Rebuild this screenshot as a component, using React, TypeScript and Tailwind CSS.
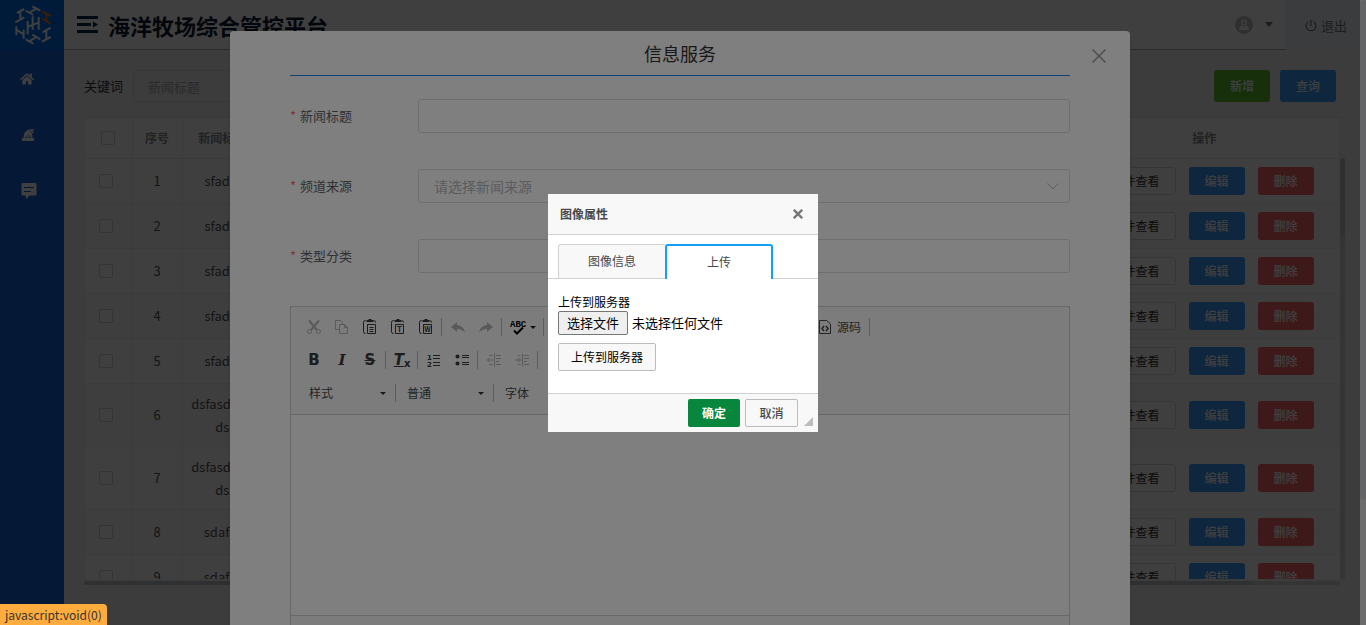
import React from "react";
import { FaHome } from "react-icons/fa";

const rows = [
  { id: 1, title: ["sfadsf"] },
  { id: 2, title: ["sfadsf"] },
  { id: 3, title: ["sfadsf"] },
  { id: 4, title: ["sfadsf"] },
  { id: 5, title: ["sfadsf"] },
  { id: 6, title: ["dsfasdfsfd", "ds"] },
  { id: 7, title: ["dsfasdfsfd", "ds"] },
  { id: 8, title: ["sdafaf"] },
  { id: 9, title: ["sdafaf"] },
];

function Logo() {
  return (
    <svg className="h-10 w-10" viewBox="42 14 112 120" fill="none" stroke="#fff" strokeWidth="6">
      <path d="M50 38 72 26M45 66 72 51M60 34V58" />
      <path d="M96 18 120 31M76 31 99 44M86 37 109 25" />
      <path d="M125 33 151 47M125 55 151 70M138 41V62" stroke="#e8741c" />
      <path d="M127 96 151 82M125 124 151 110M138 90V117" />
      <path d="M76 117 99 130M96 103 120 117M86 123 109 110" />
      <path d="M48 78V104M70 88V115M48 88 70 102" />
      <path d="M82 62V102M97 48V88M115 50V88M82 80 115 66" />
    </svg>
  );
}

function Check({ label }: { label: string }) {
  return (
    <input
      type="checkbox"
      aria-label={label}
      className="block mx-auto h-3.5 w-3.5 appearance-none rounded-[2px] border border-[#d0d2d8] bg-white"
    />
  );
}

function Sidebar() {
  return (
    <aside className="flex w-16 shrink-0 flex-col bg-[#1460d8]">
      <div className="mr-px flex h-[50px] items-center justify-center bg-[#006ce8] pl-0.5">
        <Logo />
      </div>
      <nav className="flex flex-col pt-px text-white">
        <a href="#home" aria-label="首页" className="flex h-14 items-center pl-5">
          <FaHome className="h-3.5 w-3.5" />
        </a>
        <a href="#ranch" aria-label="牧场" className="flex h-14 items-center pl-[21px]">
          <svg className="h-3.5 w-3.5" viewBox="0 0 14 14" fill="currentColor">
            <path d="M1 10h12v3H1z" />
            <path d="M2.500 9.500 C2.500 6 4.500 2.500 8 1.500 L12.500 1 L12.500 4.500 L11 6 L11.500 9.500z" />
            <path d="M8.500 2.500 10.500 4.500 12 2.500M5 9 7.500 7.500 10 9" fill="none" stroke="#1460d8" strokeWidth=".7" />
          </svg>
        </a>
        <a href="#message" aria-label="消息" className="flex h-14 items-center pl-[21px]">
          <svg className="h-4 w-4" viewBox="0 0 16 16">
            <path d="M1.500 0h13q1 0 1 1v10.500q0 1-1 1H8.500L5 16V12.500H1.500q-1 0-1-1V1q0-1 1-1z" fill="#fff" />
            <path d="M3 4.500h10M3 8.500h7" stroke="#1460d8" strokeWidth="1.200" />
          </svg>
        </a>
      </nav>
    </aside>
  );
}

function Header() {
  return (
    <header className="flex h-[50px]">
      <div className="flex flex-1 items-center border-b border-[#b0b0b0] bg-white pl-[13px]">
        <svg className="h-[18px] w-[22px] shrink-0" viewBox="0 0 22 18" fill="#002850">
          <path d="M0 0h21v3H0zM0 7h14v3H0zM0 14h21v3H0zM16 5.500l5 3-5 3z" />
        </svg>
        <h1 className="ml-[9px] text-[22px] leading-8 font-bold text-[#0c1830]">海洋牧场综合管控平台</h1>
        <div className="mr-[13px] ml-auto flex items-center gap-3">
          <svg className="h-[18px] w-[18px]" viewBox="0 0 18 18">
            <circle cx="9" cy="9" r="9" fill="#bcbcc0" />
            <circle cx="9" cy="6.500" r="3" fill="#fff" />
            <path d="M4 14q.5-4.500 3.500-4.500L9 11.500l1.500-2q3 0 3.500 4.500z" fill="#fff" />
            <circle cx="9" cy="6.500" r="1.600" fill="#bcbcc0" />
          </svg>
          <svg className="h-[5px] w-2" viewBox="0 0 8 5">
            <path d="M0 0h8L4 5z" fill="#707276" />
          </svg>
        </div>
      </div>
      <a href="#logout" className="flex w-20 items-center gap-1 bg-[#ecf3fb] pt-0.5 pl-[19px] text-[13px] text-[#777]">
        <svg className="h-3 w-3" viewBox="0 0 12 12" fill="none" stroke="#555" strokeWidth="1">
          <path d="M3.500 1.500a5 5 0 1 0 5 0M6 0v6" />
        </svg>
        退出
      </a>
    </header>
  );
}

function NewsTable() {
  return (
    <div className="mt-[15px] mr-5">
      <div className="flex">
        <div className="h-[462px] flex-1 overflow-hidden border-t border-l border-[#e6e8ee]">
          <table className="w-full table-fixed border-collapse text-center text-[13px] text-[#505256]">
            <colgroup>
              <col className="w-[47px]" />
              <col className="w-[50px]" />
              <col className="w-20" />
              <col />
              <col className="w-[270px]" />
            </colgroup>
            <thead>
              <tr className="h-10 border-b border-[#e6e8ee] bg-white text-xs text-[#85888e]">
                <th className="border-r border-[#e6e8ee]"><Check label="全选" /></th>
                <th className="border-r border-[#e6e8ee] font-bold">序号</th>
                <th className="font-bold">新闻标题</th>
                <th />
                <th className="border-r border-[#e6e8ee] font-bold">操作</th>
              </tr>
            </thead>
            <tbody>
              {rows.map((r) => (
                <tr
                  key={r.id}
                  className={
                    (r.title.length > 1 ? "h-[63px]" : "h-[45px]") +
                    " border-b border-[#ebeef5] bg-white even:bg-[#fafafa]"
                  }
                >
                  <td className="border-r border-[#ebeef5] pr-1"><Check label={"选择" + r.id} /></td>
                  <td className="border-r border-[#ebeef5]">{r.id}</td>
                  <td className="p-0 leading-[23px]">
                    {r.title.map((t) => (
                      <div key={t}>{t}</div>
                    ))}
                  </td>
                  <td />
                  <td className="p-0">
                    <div className="flex items-center justify-center gap-[13px] text-xs font-medium text-white">
                      <button className="h-7 w-20 rounded-[3px] border border-[#d8dade] bg-white font-normal text-[#333]">
                        附件查看
                      </button>
                      <button className="h-7 w-14 rounded-[3px] bg-[#3898f8]">编辑</button>
                      <button className="h-7 w-14 rounded-[3px] bg-[#f56464]">删除</button>
                    </div>
                  </td>
                </tr>
              ))}
            </tbody>
          </table>
        </div>
        <div className="w-[6px] border-t border-r border-[#e6e8ee] pt-10">
          <div className="h-full rounded-full bg-[#d4d4d6]">
            <div className="h-[78px] rounded-full bg-[#bfc1c5]" />
          </div>
        </div>
      </div>
      <div className="mt-0.5 mr-[6px] h-1 rounded-full bg-[#d4d4d6]">
        <div className="h-full w-[93%] rounded-full bg-[#bfc1c5]" />
      </div>
    </div>
  );
}

function Field({ id, label, select }: { id: string; label: string; select?: boolean }) {
  return (
    <div className="flex h-[34px] items-center">
      <label htmlFor={id} className="w-32 shrink-0 text-[13px] text-[#606266]">
        <span className="mr-1 text-[#f56c6c]">*</span>
        {label}
      </label>
      {select ? (
        <div className="relative flex-1">
          <select
            id={id}
            className="h-[34px] w-full appearance-none rounded-[3px] border border-[#dcdfe6] bg-white px-[15px] text-sm text-[#b4b8c0]"
          >
            <option>请选择新闻来源</option>
          </select>
          <svg className="absolute top-3.5 right-[11px] h-[7px] w-3" viewBox="0 0 12 7" fill="none" stroke="#b4b8c0">
            <path d="M.5.5 6 6 11.500.5" />
          </svg>
        </div>
      ) : (
        <input id={id} className="h-[34px] min-w-0 flex-1 rounded-[3px] border border-[#dcdfe6] bg-white px-[15px] text-sm" />
      )}
    </div>
  );
}

function Tool({ name, dim, children }: { name: string; dim?: boolean; children: React.ReactNode }) {
  return (
    <button
      aria-label={name}
      className={"flex h-7 w-7 shrink-0 items-center justify-center text-[#3a3a3a] " + (dim ? "opacity-35" : "")}
    >
      {children}
    </button>
  );
}

function Icon({ children }: { children: React.ReactNode }) {
  return (
    <svg className="h-4 w-4" viewBox="0 0 16 16" fill="none" stroke="currentColor">
      {children}
    </svg>
  );
}

function Sep() {
  return <span className="mr-0.5 ml-px h-[18px] w-px shrink-0 bg-[#b8b8b8]" />;
}

function Clipboard({ children }: { children: React.ReactNode }) {
  return (
    <Icon>
      <path d="M3.500 1.500H3q-1.500 0-1.500 2v9q0 2 1.500 2h.5M12 1.500q1.500 0 1.500 2" />
      <path d="M4.500 1h2V0h3v1h2v2h-7z" fill="currentColor" stroke="none" />
      <path d="M5.500 5.500h8v9h-8z" />
      {children}
    </Icon>
  );
}

function Combo({ label }: { label: string }) {
  return (
    <button className="flex h-7 w-[94px] shrink-0 items-center justify-between pr-2 pl-[9px] text-xs text-[#484848]">
      {label}
      <svg className="h-[3px] w-1.5" viewBox="0 0 6 3"><path d="M0 0h6L3 3z" fill="#333" /></svg>
    </button>
  );
}

function Editor() {
  return (
    <div className="border border-[#d1d1d1]">
      <div className="flex flex-col gap-[5px] border-b border-[#d1d1d1] bg-[#f8f8f8] pt-1.5 pb-[7px] pl-[9px]">
        <div className="flex items-center">
          <Tool name="剪切" dim>
            <Icon>
              <path d="M3 1.500 11 11M13 1.500 5 11" strokeWidth="2" />
              <circle cx="3.500" cy="12.500" r="2" />
              <circle cx="12.500" cy="12.500" r="2" />
            </Icon>
          </Tool>
          <Tool name="复制" dim>
            <Icon><path d="M5 10.500H1.500v-9h5l2 2V5M5.500 5.500h5l3 3v6h-8zM10.500 5.500v3h3" /></Icon>
          </Tool>
          <Tool name="粘贴"><Clipboard><path d="M7.500 8.500h4M7.500 10.500h4M7.500 12.500h4" /></Clipboard></Tool>
          <Tool name="粘贴为文本">
            <Clipboard>
              <text x="9.500" y="13" textAnchor="middle" fontSize="8" fontWeight="bold" fill="currentColor" stroke="none">T</text>
            </Clipboard>
          </Tool>
          <Tool name="从 Word 粘贴">
            <Clipboard>
              <text x="9.500" y="13" textAnchor="middle" fontSize="7" fontWeight="bold" fill="currentColor" stroke="none">W</text>
            </Clipboard>
          </Tool>
          <Sep />
          <Tool name="撤销" dim>
            <Icon><path d="M1 8 7 3v3q7 .5 8 7.500-3-3.500-8-3.500v3z" fill="currentColor" stroke="none" /></Icon>
          </Tool>
          <Tool name="重做" dim>
            <Icon><path d="M15 8 9 3v3Q2 6.500 1 13.500q3-3.500 8-3.500v3z" fill="currentColor" stroke="none" /></Icon>
          </Tool>
          <Sep />
          <button aria-label="拼写检查" className="flex h-7 w-[38px] shrink-0 items-center gap-1 pl-1.5 text-black">
            <svg className="h-4 w-4" viewBox="0 0 16 16">
              <text x="0" y="8" fontSize="9" fontWeight="bold" fontFamily="Liberation Mono" fill="currentColor">ABC</text>
              <path d="M4 11.500 7 14.500 13 8.500" fill="none" stroke="currentColor" strokeWidth="2" />
            </svg>
            <svg className="h-[3px] w-1.5" viewBox="0 0 6 3"><path d="M0 0h6L3 3z" fill="#222" /></svg>
          </button>
          <Sep />
          <span className="w-[271px]" />
          <button className="flex h-7 items-center gap-1 pr-[7px] text-xs text-[#484848]">
            <Icon>
              <path d="M2.500 1.500h7l4 3.500v9.500h-11z" />
              <path d="M7 7 5 9.500 7 12M9 7 11 9.500 9 12" strokeWidth="1.500" />
            </Icon>
            源码
          </button>
          <Sep />
        </div>
        <div className="flex items-center font-['DejaVu_Sans']">
          <Tool name="加粗"><span className="text-[15px] font-bold">B</span></Tool>
          <Tool name="倾斜"><span className="font-['DejaVu_Serif'] text-[15px] font-bold italic">I</span></Tool>
          <Tool name="删除线"><span className="text-[15px] font-bold line-through">S</span></Tool>
          <Sep />
          <Tool name="清除格式">
            <span className="text-[15px] leading-4 font-bold italic underline">T</span>
            <span className="self-end pb-1 text-[10px] leading-3 font-bold">x</span>
          </Tool>
          <Sep />
          <Tool name="编号列表">
            <Icon>
              <path d="M7 3.500h7M7 6.500h7M7 10.500h7M7 13.500h7" />
              <text x="1" y="7.500" fontSize="7" fontWeight="bold" fill="currentColor" stroke="none">1</text>
              <text x="1" y="15" fontSize="7" fontWeight="bold" fill="currentColor" stroke="none">2</text>
            </Icon>
          </Tool>
          <Tool name="项目列表">
            <Icon>
              <path d="M8 3.500h7M8 5.500h7M8 10.500h7M8 12.500h7" />
              <circle cx="3.500" cy="4.500" r="2" fill="currentColor" stroke="none" />
              <circle cx="3.500" cy="11.500" r="2" fill="currentColor" stroke="none" />
            </Icon>
          </Tool>
          <Sep />
          <Tool name="减少缩进" dim>
            <Icon><path d="M8.500 1.500v13M10 3.500h5M10 6.500h5M10 9.500h3M10 12.500h5M3.500 3.500h3M3.500 12.500h3M1 8h6M3.500 6 1.500 8l2 2" /></Icon>
          </Tool>
          <Tool name="增加缩进" dim>
            <Icon><path d="M8.500 1.500v13M10 3.500h5M10 6.500h5M10 9.500h3M10 12.500h5M3.500 3.500h3M3.500 12.500h3M1 8h6M4.500 6l2 2-2 2" /></Icon>
          </Tool>
          <Sep />
        </div>
        <div className="flex items-center">
          <Combo label="样式" />
          <Sep />
          <Combo label="普通" />
          <Sep />
          <Combo label="字体" />
        </div>
      </div>
      <div className="h-[200px] bg-white" contentEditable suppressContentEditableWarning role="textbox" aria-label="正文" />
      <div className="h-8 border-t border-[#d1d1d1] bg-[#f8f8f8]" />
    </div>
  );
}

function NewsModal() {
  return (
    <div className="absolute inset-0 flex overflow-hidden bg-black/50">
      <div className="flex flex-1 items-start justify-center">
        <section
          role="dialog"
          aria-label="信息服务"
          className="relative mt-[31px] w-full max-w-[900px] rounded bg-white px-[60px] pb-10 shadow-md"
        >
          <h2 className="h-[45px] border-b border-[#2080f0] text-center text-lg leading-[44px] text-[#303133]">信息服务</h2>
          <button aria-label="关闭" className="absolute top-[18px] right-6">
            <svg className="h-3.5 w-3.5" viewBox="0 0 14 14" stroke="#909399" strokeWidth="1.400">
              <path d="M.5.5l13 13M13.500.5l-13 13" />
            </svg>
          </button>
          <form className="flex flex-col gap-9 pt-[23px] pb-[33px]">
            <Field id="title" label="新闻标题" />
            <Field id="source" label="频道来源" select />
            <Field id="category" label="类型分类" />
          </form>
          <Editor />
        </section>
      </div>
      <div className="w-1.5 bg-[#d8d8d8]">
        <div className="h-4/5 rounded-full bg-[#c6c8cc]" />
      </div>
    </div>
  );
}

function ImageDialog() {
  return (
    <div className="absolute inset-0 flex items-center justify-center bg-black/50">
      <section role="dialog" aria-label="图像属性" className="w-[270px] bg-white text-xs text-[#484848]">
        <div className="flex h-[41px] items-center justify-between border-b border-[#d1d1d1] bg-[#f8f8f8] pr-[15px] pl-3">
          <h3 className="font-bold">图像属性</h3>
          <button aria-label="关闭">
            <svg className="h-2.5 w-2.5" viewBox="0 0 10 10" stroke="#777" strokeWidth="2.400">
              <path d="M.8.8 9.200 9.200M9.200.8.8 9.200" />
            </svg>
          </button>
        </div>
        <div role="tablist" className="flex h-[44px] border-b border-[#d1d1d1] pt-[9px] pl-2.5">
          <button role="tab" className="h-[34px] w-[107px] rounded-tl-[3px] border border-r-0 border-b-0 border-[#d1d1d1] bg-[#f8f8f8]">
            图像信息
          </button>
          <button role="tab" aria-selected="true" className="h-[35px] w-[108px] rounded-t-[3px] border-2 border-b-0 border-[#139ff7] bg-white">
            上传
          </button>
        </div>
        <div className="flex h-[114px] flex-col items-start px-2.5 pt-3.5 text-black">
          <div className="leading-[18px]">上传到服务器</div>
          <div className="flex items-center gap-1 text-[13px]">
            <input type="file" id="upload" className="sr-only" />
            <label htmlFor="upload" className="flex h-6 items-center rounded-[2px] border border-[#767676] bg-[#efefef] px-2">
              选择文件
            </label>
            <span>未选择任何文件</span>
          </div>
          <button className="mt-2 h-7 rounded-[2px] border border-[#bcbcbc] bg-[#f8f8f8] px-3">上传到服务器</button>
        </div>
        <div className="flex h-[39px] items-start justify-end border-t border-[#d1d1d1] bg-[#f8f8f8] pt-[5px] pr-[5px]">
          <button className="mr-[5px] h-7 w-[52px] rounded-[2px] bg-[#09863e] font-bold text-white">确定</button>
          <button className="h-7 w-[53px] rounded-[2px] border border-[#bcbcbc] bg-[#f8f8f8] font-medium">取消</button>
          <svg className="mt-[18px] ml-1.5 h-[9px] w-[9px]" viewBox="0 0 9 9">
            <path d="M9 0v9H0z" fill="#bcbcbc" />
          </svg>
        </div>
      </section>
    </div>
  );
}

export default function App() {
  return (
    <div className="relative flex h-screen overflow-hidden bg-[#f2f2f2] font-['Noto_Sans_CJK_SC',sans-serif]">
      <Sidebar />
      <div className="flex min-w-0 flex-1 flex-col">
        <Header />
        <main className="pt-5 pl-5">
          <div className="mr-[30px] flex h-8 items-center">
            <label htmlFor="keyword" className="text-[13px] text-[#303133]">关键词</label>
            <input
              id="keyword"
              placeholder="新闻标题"
              className="ml-2.5 h-8 w-52 rounded border border-[#dcdfe6] px-3.5 text-[13px] placeholder:text-[#a8abb2]"
            />
            <div className="ml-auto flex gap-2.5 text-xs font-medium text-white">
              <button className="h-8 w-14 rounded-[3px] bg-[#5cc02c]">新增</button>
              <button className="h-8 w-14 rounded-[3px] bg-[#3898f8]">查询</button>
            </div>
          </div>
          <NewsTable />
        </main>
      </div>
      <NewsModal />
      <ImageDialog />
      <div className="absolute bottom-0 left-0 rounded-tr bg-[#ffac3e] px-[5px] text-xs leading-[21px] text-[#333]">
        javascript:void(0)
      </div>
    </div>
  );
}
